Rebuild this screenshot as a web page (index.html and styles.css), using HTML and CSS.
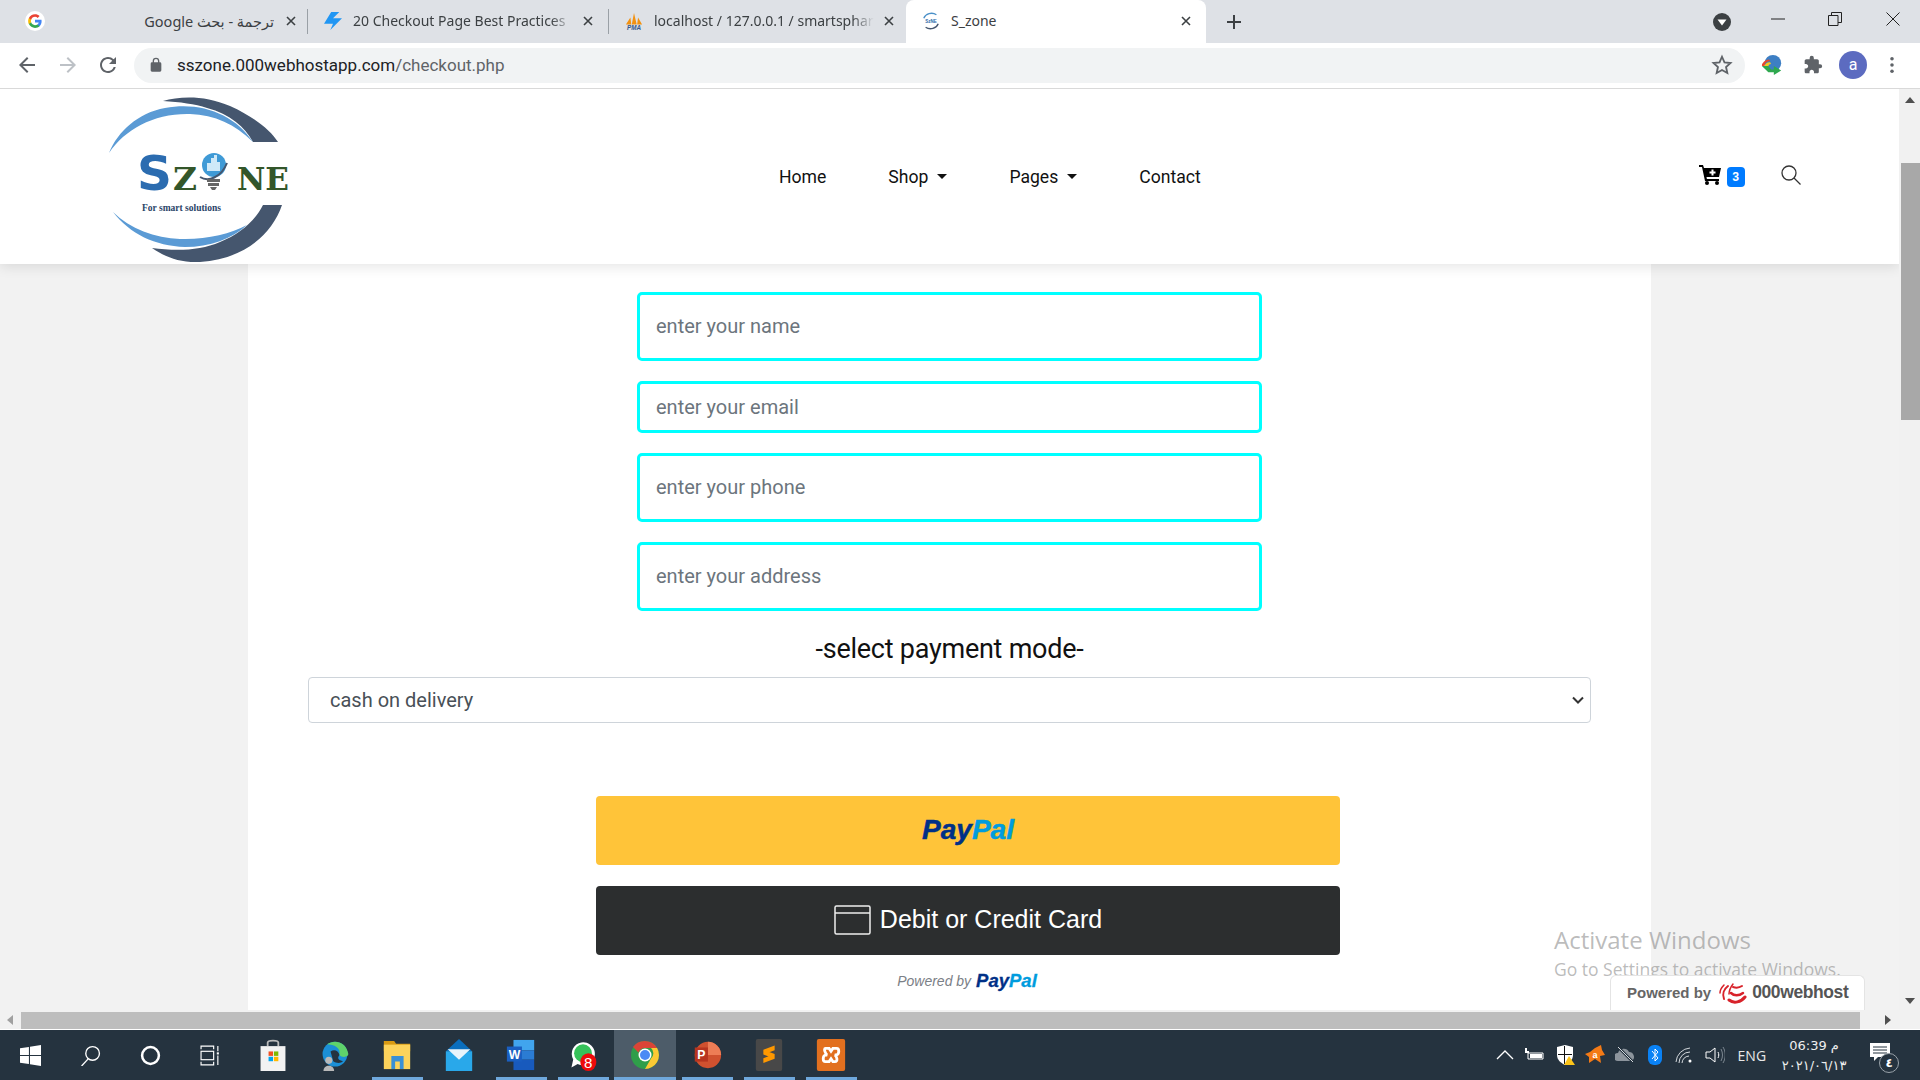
FILE: index.html
```html
<!DOCTYPE html>
<html lang="en">
<head>
    <meta charset="UTF-8">
    <title>S_zone</title>
    <link rel="stylesheet" href="styles.css">
</head>
<body>
    <!-- browser tabs -->
    <div class="tabstrip">
        <div class="tab tab-first">
            <svg class="tab-icon" viewBox="0 0 24 24">
                <circle cx="12" cy="12" r="12" fill="#fff"/>
                <g transform="translate(3 3) scale(.75)">
                    <path fill="#4285F4" d="M22.56 12.25c0-.78-.07-1.53-.2-2.25H12v4.26h5.92c-.26 1.37-1.04 2.53-2.21 3.31v2.77h3.57c2.08-1.92 3.28-4.74 3.28-8.09z"/>
                    <path fill="#34A853" d="M12 23c2.97 0 5.46-.98 7.28-2.66l-3.57-2.77c-.98.66-2.23 1.06-3.71 1.06-2.86 0-5.29-1.93-6.16-4.53H2.18v2.84C3.99 20.53 7.7 23 12 23z"/>
                    <path fill="#FBBC05" d="M5.84 14.09c-.22-.66-.35-1.36-.35-2.09s.13-1.43.35-2.09V7.07H2.18C1.43 8.55 1 10.22 1 12s.43 3.45 1.18 4.93l2.85-2.22.81-.62z"/>
                    <path fill="#EA4335" d="M12 5.38c1.62 0 3.06.56 4.21 1.64l3.15-3.15C17.45 2.09 14.97 1 12 1 7.7 1 3.99 3.47 2.18 7.07l3.66 2.84c.87-2.6 3.3-4.53 6.16-4.53z"/>
                </g>
            </svg>
            <span class="tab-title tab-title-rtl" dir="rtl">ترجمة - بحث Google</span>
            <svg class="tab-close" viewBox="0 0 10 10"><path d="M1 1l8 8M9 1l-8 8"/></svg>
        </div>
        <div class="tab-sep"></div>
        <div class="tab">
            <svg class="tab-icon" viewBox="0 0 20 20"><path fill="#2196f3" d="M8 0L0 13h10L7 20 20 7H10l7-7z"/></svg>
            <span class="tab-title tab-title-fade">20 Checkout Page Best Practices</span>
            <svg class="tab-close" viewBox="0 0 10 10"><path d="M1 1l8 8M9 1l-8 8"/></svg>
        </div>
        <div class="tab-sep"></div>
        <div class="tab">
            <svg class="tab-icon" viewBox="0 0 20 20">
                <path fill="#f29111" d="M1 14L6 6l1 8zM7.500 14L10 1l3 13zM13.500 14l1-8 4.500 8z"/>
                <text class="pma-text" x="10" y="20">PMA</text>
            </svg>
            <span class="tab-title tab-title-fade">localhost / 127.0.0.1 / smartsphar</span>
            <svg class="tab-close" viewBox="0 0 10 10"><path d="M1 1l8 8M9 1l-8 8"/></svg>
        </div>
        <div class="tab tab-active">
            <svg class="tab-icon" viewBox="0 0 20 20">
                <path fill="none" stroke="#4a90c8" stroke-width="1.500" d="M2 7a9 8 0 0 1 14-4"/>
                <path fill="none" stroke="#45566e" stroke-width="1.500" d="M18 13a9 8 0 0 1-14 4"/>
                <text class="favicon-text" x="10" y="12">SzNE</text>
            </svg>
            <span class="tab-title">S_zone</span>
            <svg class="tab-close" viewBox="0 0 10 10"><path d="M1 1l8 8M9 1l-8 8"/></svg>
        </div>
        <svg class="new-tab" viewBox="0 0 14 14"><path d="M7 0v14M0 7h14"/></svg>
        <svg class="tab-search" viewBox="0 0 18 18">
            <circle cx="9" cy="9" r="9" fill="#3c4043"/>
            <path fill="#fff" d="M4.500 6.500h9L9 12.500z"/>
        </svg>
        <div class="window-controls">
            <svg class="win-btn win-min" viewBox="0 0 14 14"><path d="M0 7h14"/></svg>
            <svg class="win-btn win-restore" viewBox="0 0 14 14"><path d="M.5 3.500h9.500v10H.5zM3.500 3.500V.5h10v10H10"/></svg>
            <svg class="win-btn win-close" viewBox="0 0 14 14"><path d="M.5.5l13 13M13.500.5l-13 13"/></svg>
        </div>
    </div>

    <!-- address bar -->
    <div class="toolbar">
        <svg class="nav-icon" viewBox="0 0 24 24"><path d="M20 11H7.830l5.590-5.590L12 4l-8 8 8 8 1.410-1.410L7.830 13H20v-2z"/></svg>
        <svg class="nav-icon nav-disabled" viewBox="0 0 24 24"><path d="M4 11h12.170l-5.590-5.590L12 4l8 8-8 8-1.410-1.410L16.170 13H4v-2z"/></svg>
        <svg class="nav-icon" viewBox="0 0 24 24"><path d="M17.650 6.350A7.958 7.958 0 0 0 12 4c-4.420 0-7.990 3.580-7.990 8s3.570 8 7.990 8c3.730 0 6.840-2.550 7.730-6h-2.080A5.990 5.990 0 0 1 12 18c-3.310 0-6-2.690-6-6s2.690-6 6-6c1.660 0 3.140.690 4.220 1.780L13 11h7V4l-2.350 2.350z"/></svg>
        <div class="omnibox">
            <svg class="lock-icon" viewBox="0 0 24 24"><path d="M18 8h-1V6A5 5 0 0 0 7 6v2H6a2 2 0 0 0-2 2v10c0 1.100.9 2 2 2h12a2 2 0 0 0 2-2V10a2 2 0 0 0-2-2zM9 6a3 3 0 0 1 6 0v2H9V6z"/></svg>
            <span class="url"><span class="url-host">sszone.000webhostapp.com</span>/checkout.php</span>
            <svg class="star-icon" viewBox="0 0 24 24"><path d="M12 3l2.700 6.100 6.600.7-4.900 4.400 1.400 6.500L12 17.400l-5.800 3.300 1.400-6.500-4.900-4.400 6.600-.7z"/></svg>
        </div>
        <svg class="idm-icon" viewBox="0 0 24 24">
            <circle cx="13" cy="10" r="9" fill="#3d7fc4"/>
            <path fill="#e6462e" d="M1 13a8 7 0 0 1 8-7l1 2a5 5 0 0 0-6 5z"/>
            <path fill="#f4c81e" d="M4 14a5 5 0 0 1 6-5l1 2a3 3 0 0 0-3 3z"/>
            <path fill="#2fa84f" d="M1 13h7l3 4h3v-4l8 5-8 5v-3H8z"/>
        </svg>
        <svg class="ext-icon" viewBox="0 0 24 24"><path d="M20.500 11H19V7c0-1.100-.9-2-2-2h-4V3.500a2.500 2.500 0 0 0-5 0V5H4c-1.100 0-1.990.9-1.990 2v3.800H3.500c1.490 0 2.700 1.210 2.700 2.700s-1.210 2.700-2.700 2.700H2V20c0 1.100.9 2 2 2h3.800v-1.500c0-1.490 1.210-2.700 2.700-2.700s2.700 1.210 2.700 2.700V22H17c1.100 0 2-.9 2-2v-4h1.500a2.500 2.500 0 0 0 0-5z"/></svg>
        <div class="avatar">a</div>
        <svg class="menu-icon" viewBox="0 0 4 18"><circle cx="2" cy="2" r="2"/><circle cx="2" cy="9" r="2"/><circle cx="2" cy="16" r="2"/></svg>
    </div>

    <div class="viewport">
        <div class="view-main">
            <div class="page">
                <header class="site-header">
                    <svg class="logo" viewBox="0 0 240 175">
                        <path fill="#45566e" d="M83 12C100 7 125 6 150 17c22 10 40 23 48 36h-25c-8-15-23-28-46-34-12-4-27-6-44-7z"/>
                        <path fill="#5b9bd5" d="M29 64c9-22 29-40 56-45 35-7 70 6 88 34-18-18-38-27-63-28-35-1-65 15-81 39z"/>
                        <path fill="#45566e" d="M202 116c-10 29-37 54-82 57-20 1-35-5-48-14 23 3 48 3 68-6 20-8 35-21 43-37z"/>
                        <path fill="#5b9bd5" d="M33 123c17 22 42 34 72 35 25 0 47-8 62-22-17 9-42 15-67 14-25-1-50-10-67-27z"/>
                        <text class="logo-s" x="57" y="101" textLength="35" lengthAdjust="spacingAndGlyphs">S</text>
                        <text class="logo-green" x="93" y="101" textLength="24" lengthAdjust="spacingAndGlyphs">Z</text>
                        <text class="logo-green" x="157" y="101" textLength="52" lengthAdjust="spacingAndGlyphs">NE</text>
                        <circle cx="134" cy="76" r="12" fill="#3f9ad6"/>
                        <path fill="#cfe9f8" d="M127 82v-8h4v-5h3v-3h3v7h3v9z"/>
                        <path fill="none" stroke="#45566e" stroke-width="2" d="M120 88c8 5 21 1 27-14"/>
                        <path fill="#666" d="M127 90h13v3h-13zM128 94h11v3h-11zM130 98h7l-2 3h-3z"/>
                        <text class="logo-tag" x="62" y="122">For smart solutions</text>
                    </svg>
                    <nav class="site-nav">
                        <a class="nav-link">Home</a>
                        <a class="nav-link">Shop<span class="caret"></span></a>
                        <a class="nav-link">Pages<span class="caret"></span></a>
                        <a class="nav-link">Contact</a>
                    </nav>
                    <div class="header-actions">
                        <svg class="cart-icon" viewBox="0 0 22 20">
                            <path d="M0 0h4l1 3h17l-2 9H7.500l.4 2H20v2H6L3 2H0z"/>
                            <circle cx="8" cy="18" r="2"/><circle cx="18" cy="18" r="2"/>
                            <path fill="#fff" d="M12.500 4.500h2v2h2v2h-2v2h-2v-2h-2v-2h2z"/>
                        </svg>
                        <span class="cart-badge">3</span>
                        <svg class="search-icon" viewBox="0 0 20 20"><circle cx="8" cy="8" r="7"/><path d="M13 13l6.500 6.500"/></svg>
                    </div>
                </header>

                <main class="sheet">
                    <form class="checkout-fields">
                        <input class="field field-tall" type="text" placeholder="enter your name">
                        <input class="field" type="text" placeholder="enter your email">
                        <input class="field field-tall" type="text" placeholder="enter your phone">
                        <input class="field field-tall" type="text" placeholder="enter your address">
                    </form>
                    <h3 class="pay-title">-select payment mode-</h3>
                    <div class="select-wrap">
                        <select class="pay-select">
                            <option>cash on delivery</option>
                        </select>
                        <svg class="select-arrow" viewBox="0 0 12 8"><path d="M1 1.500l5 5 5-5"/></svg>
                    </div>
                    <div class="paypal-box">
                        <div class="pp-btn pp-yellow">
                            <span class="pp-word"><span class="pp-dark">Pay</span><span class="pp-light">Pal</span></span>
                        </div>
                        <div class="pp-btn pp-black">
                            <svg class="card-icon" viewBox="0 0 37 30"><rect x="1" y="1" width="35" height="28" rx="1.500"/><path d="M1 8h35"/></svg>
                            <span>Debit or Credit Card</span>
                        </div>
                        <div class="pp-powered">
                            <span>Powered by</span>
                            <span class="pp-word pp-word-small"><span class="pp-dark">Pay</span><span class="pp-light">Pal</span></span>
                        </div>
                    </div>
                </main>

                <div class="watermark">
                    <div class="watermark-title">Activate Windows</div>
                    <div class="watermark-sub">Go to Settings to activate Windows.</div>
                </div>
                <div class="host-badge">
                    <span>Powered by</span>
                    <svg class="host-logo" viewBox="0 0 28 24">
                        <g fill="none" stroke="#d8222a" stroke-linecap="round">
                            <path stroke-width="3" d="M10 20c5 4 12 2 16-3"/>
                            <path stroke-width="2.500" d="M12 13c3 3 8 3 12 0"/>
                            <path stroke-width="2" d="M14 7c3 1 6 1 9-1"/>
                            <path stroke-width="2" d="M5 19C3 14 5 9 9 6"/>
                            <path stroke-width="1.500" d="M10 14c0-3 1-6 4-10"/>
                            <path stroke-width="1.500" d="M1 13c0-3 2-6 4-8"/>
                        </g>
                    </svg>
                    <span class="host-name">000webhost</span>
                </div>
            </div>
            <div class="vscroll">
                <svg class="scroll-arrow" viewBox="0 0 10 6"><path d="M5 0l5 6H0z"/></svg>
                <div class="vscroll-thumb"></div>
                <svg class="scroll-arrow scroll-arrow-end" viewBox="0 0 10 6"><path d="M5 6L0 0h10z"/></svg>
            </div>
        </div>
        <div class="hscroll">
            <svg class="hscroll-arrow hscroll-left" viewBox="0 0 6 10"><path d="M0 5l6-5v10z"/></svg>
            <div class="hscroll-thumb"></div>
            <svg class="hscroll-arrow hscroll-right" viewBox="0 0 6 10"><path d="M6 5L0 0v10z"/></svg>
        </div>
    </div>

    <!-- windows taskbar -->
    <div class="taskbar">
        <div class="task-apps">
            <div class="task-item task-tool">
                <svg class="task-icon-sm" viewBox="0 0 20 20"><path fill="#fff" d="M0 3l8.500-1.200v7.700H0zM9.500 1.600L20 0v9.500H9.500zM0 10.500h8.500v7.700L0 17zM9.500 10.500H20V20L9.500 18.400z"/></svg>
            </div>
            <div class="task-item task-tool">
                <svg class="task-icon-sm" viewBox="0 0 20 20"><circle cx="12" cy="8" r="6.500" fill="none" stroke="#fff" stroke-width="1.300"/><path stroke="#fff" stroke-width="1.300" d="M8 13l-6.500 7"/></svg>
            </div>
            <div class="task-item task-tool">
                <svg class="task-icon-sm" viewBox="0 0 20 20"><circle cx="10" cy="10" r="8" fill="none" stroke="#fff" stroke-width="2.400"/></svg>
            </div>
            <div class="task-item task-tool">
                <svg class="task-icon-sm" viewBox="0 0 20 20" fill="none" stroke="#fff" stroke-width="1.100"><path d="M1 4V1h12v3M1 16v3h12v-3"/><rect x="1" y="6" width="12" height="8"/><path d="M17 1v5M17 10v9"/><path stroke-width="2" d="M16 8h2"/></svg>
            </div>
            <div class="task-item task-first-app">
                <svg class="task-icon" viewBox="0 0 30 36">
                    <path fill="none" stroke="#bbb" stroke-width="2" d="M9 8V4c0-3 12-3 12 0v4"/>
                    <path fill="#f2f2f2" d="M1 8h28v28H1z"/>
                    <path fill="#f25022" d="M10 14h5v5h-5z"/><path fill="#7fba00" d="M16 14h5v5h-5z"/>
                    <path fill="#00a4ef" d="M10 20h5v5h-5z"/><path fill="#ffb900" d="M16 20h5v5h-5z"/>
                </svg>
            </div>
            <div class="task-item">
                <svg class="task-icon" viewBox="0 0 30 36">
                    <circle cx="15" cy="17" r="14" fill="#1b8fd6"/>
                    <path fill="#5fd36b" d="M6 6c8-6 22-3 24 11 0 4-8 4-10 1 2-8-6-12-14-12z"/>
                    <path fill="#25333f" d="M10 14c4-3 9-1 10 4-3 4-1 6 4 7-3 3-8 2-11 0z"/>
                    <circle cx="8" cy="24" r="4" fill="#b9b9b9"/><path fill="#b9b9b9" d="M2 36c0-8 12-8 12 0z"/>
                </svg>
            </div>
            <div class="task-item task-open">
                <svg class="task-icon" viewBox="0 0 30 34">
                    <path fill="#d99a12" d="M1 2h11l2 3h15v8H1z"/>
                    <path fill="#fdd35b" d="M1 6h28v26H1z"/>
                    <path fill="#3a90d6" d="M9 32V18h13v14h-4v-8h-5v8z"/>
                </svg>
            </div>
            <div class="task-item">
                <svg class="task-icon" viewBox="0 0 30 34">
                    <path fill="#0a6ebd" d="M1 13L15 0l14 13z"/>
                    <path fill="#29a8ea" d="M1 13h28v21H1z"/>
                    <path fill="#e8f4fb" d="M3 11h24L15 22z"/>
                </svg>
            </div>
            <div class="task-item task-open">
                <svg class="task-icon" viewBox="0 0 30 34">
                    <path fill="#41a5ee" d="M7 1h22v11H7z"/><path fill="#2b7cd3" d="M7 12h22v10H7z"/>
                    <path fill="#185abd" d="M7 22h22v11H7z"/>
                    <path fill="#1a5fc1" d="M0 8h16v16H0z"/>
                    <text class="icon-letter" x="8" y="21">W</text>
                </svg>
            </div>
            <div class="task-item task-open">
                <svg class="task-icon" viewBox="0 0 30 36">
                    <path fill="#fff" d="M2 32l2-9a13 13 0 1 1 5 5z"/>
                    <circle cx="15" cy="16" r="10" fill="#36c25a"/>
                    <ellipse cx="21" cy="26" rx="9" ry="10" fill="#ee0b0b"/>
                    <text class="icon-badge" x="21" y="33">8</text>
                </svg>
            </div>
            <div class="task-item task-active">
                <svg class="task-icon" viewBox="0 0 30 30">
                    <circle cx="15" cy="15" r="14" fill="#2f9e4a"/>
                    <path fill="#db4437" d="M15 1a14 14 0 0 1 12.100 7H15a7 7 0 0 0-6.500 4.500L3 7A14 14 0 0 1 15 1z"/>
                    <path fill="#fcc934" d="M27.100 8A14 14 0 0 1 15 29l6-10.500A7 7 0 0 0 21 8z"/>
                    <circle cx="15" cy="15" r="6.500" fill="#fff"/><circle cx="15" cy="15" r="5" fill="#4a8af4"/>
                </svg>
            </div>
            <div class="task-item task-open">
                <svg class="task-icon" viewBox="0 0 30 34">
                    <circle cx="16" cy="17" r="14" fill="#d0512f"/>
                    <path fill="#ed7d56" d="M16 3a14 14 0 0 1 14 14H16z"/>
                    <path fill="#b7351f" d="M2 9h14v15H2z"/>
                    <text class="icon-letter" x="9" y="21">P</text>
                </svg>
            </div>
            <div class="task-item task-open">
                <svg class="task-icon" viewBox="0 0 30 34">
                    <rect x="1" width="28" height="34" rx="2" fill="#484848"/>
                    <path fill="#ff9800" d="M21 7v5L9 16.500v-5zM9 11.500l12 4.500v5L9 16.500zM21 16v5L9 25.500v-5z"/>
                </svg>
            </div>
            <div class="task-item task-open">
                <svg class="task-icon" viewBox="0 0 30 34">
                    <rect width="30" height="34" rx="2" fill="#e2701f"/>
                    <path fill="none" stroke="#fff" stroke-width="3" d="M9 10h4l2 3 2-3h4c3 0 3 6 0 7h-2c2 1 4 7 0 7h-2l-2-3-2 3H9c-3 0-3-6 0-7h2c-2-1-4-7-2-7z"/>
                </svg>
            </div>
        </div>
        <div class="tray">
            <svg class="tray-icon" viewBox="0 0 20 20"><path fill="none" stroke="#fff" stroke-width="1.300" d="M2 14l8-8 8 8"/></svg>
            <svg class="tray-icon" viewBox="0 0 20 20" fill="#fff"><path fill="none" stroke="#fff" d="M3 8v6h15V8z"/><path d="M5 9h12v4H5z"/><path d="M1 3h1v3h2V3h0v5H0V3z"/></svg>
            <svg class="tray-icon" viewBox="0 0 20 20">
                <path fill="#fff" d="M10 0l8 2v8c0 5-4 8-8 10-4-2-8-5-8-10V2z"/>
                <path fill="#111" d="M10 1v8h7v1H10v9h-1v-9H3V9h6V1z"/>
                <path fill="#fcc419" d="M14 11l6 9h-11z"/>
            </svg>
            <svg class="tray-icon" viewBox="0 0 20 20"><path fill="#f47a16" d="M10 3l6-3 1 5 3 5-5 1 1 7-6-4-6 4v-6l-4-3 5-2z"/><text class="avast-a" x="10" y="13">a</text></svg>
            <svg class="tray-icon" viewBox="0 0 20 20"><path fill="#8c949c" d="M3 16a4 4 0 0 1 0-8 6 6 0 0 1 11-1 5 5 0 0 1 3 9z"/><path stroke="#25333f" stroke-width="2.500" d="M3 2l15 15"/><path stroke="#d7dce0" d="M3 2l15 15"/></svg>
            <svg class="tray-icon" viewBox="0 0 20 20"><rect x="3" width="14" height="20" rx="6" fill="#0a82f5"/><path fill="none" stroke="#fff" d="M7 6l6 7-3 3V4l3 3-6 7"/></svg>
            <svg class="tray-icon" viewBox="0 0 20 20" fill="none" stroke="#d4d9dd"><path d="M1 17A15 15 0 0 1 15 3"/><path d="M4 18A11 11 0 0 1 15 7"/><path d="M7 18a8 8 0 0 1 7-7"/><circle cx="15" cy="16" r="1.500" fill="#fff" stroke="none"/></svg>
            <svg class="tray-icon" viewBox="0 0 20 20" fill="none" stroke="#fff"><path d="M1 7h4l5-4v14l-5-4H1z"/><path d="M13 7c1 2 1 4 0 6"/><path stroke="#7c8790" d="M16 4c2 4 2 8 0 12M18 2c3 5 3 11 0 16"/></svg>
        </div>
        <span class="tray-lang">ENG</span>
        <div class="clock">
            <span>06:39 م</span>
            <span>٢٠٢١/٠٦/١٣</span>
        </div>
        <div class="notify">
            <svg class="notify-icon" viewBox="0 0 20 18"><path fill="#fff" d="M0 0h20v14H8l-4 4v-4H0z"/><path stroke="#25333f" d="M3 4h14M3 7h14M3 10h14"/></svg>
            <span class="notify-count">٤</span>
        </div>
    </div>
</body>
</html>
```

FILE: styles.css
```css
* {
    box-sizing: border-box;
}

body {
    margin: 0;
    width: 1920px;
    height: 1080px;
    overflow: hidden;
    font-family: 'Roboto', 'DejaVu Sans', sans-serif;
    display: flex;
    flex-direction: column;
    background-color: #fff;
}

/* tabs */
.tabstrip {
    height: 43px;
    flex: none;
    display: flex;
    align-items: stretch;
    padding-left: 7px;
    background-color: #dee1e6;
}

.tab {
    width: 300px;
    flex: none;
    display: flex;
    align-items: center;
    padding: 0 15px 2px 16px;
    color: #3c4043;
}

.tab-first {
    padding: 0 11px 2px 18px;
}

.tab-active {
    margin-left: -3px;
    background-color: #fff;
    border-radius: 8px 8px 0 0;
}

.tab-sep {
    width: 1px;
    height: 25px;
    margin-top: 9px;
    flex: none;
    background-color: #9aa0a6;
}

.tab-icon {
    width: 18px;
    height: 18px;
    flex: none;
    margin-right: 11px;
}

.tab-first .tab-icon {
    width: 20px;
    height: 20px;
}

.tab-title {
    flex: 1;
    min-width: 0;
    white-space: nowrap;
    overflow: hidden;
    font-family: 'Noto Sans', 'DejaVu Sans', sans-serif;
    font-size: 14px;
}

.tab-title-rtl {
    font-size: 14.500px;
    line-height: 24px;
}

.tab-title-fade {
    -webkit-mask-image: linear-gradient(to right, #000 90%, transparent 100%);
    mask-image: linear-gradient(to right, #000 90%, transparent 100%);
}

.tab-close {
    width: 10px;
    height: 10px;
    flex: none;
    margin-left: 10px;
    stroke: #3c4043;
    stroke-width: 1.6;
}

.tab-first .tab-close {
    margin-left: 12px;
}

.pma-text {
    font: italic bold 7px 'Liberation Sans', sans-serif;
    fill: #34588c;
    text-anchor: middle;
}

.favicon-text {
    font: bold 5px 'Liberation Sans', sans-serif;
    fill: #2e6aa8;
    text-anchor: middle;
}

.new-tab {
    width: 14px;
    height: 14px;
    flex: none;
    align-self: center;
    margin-left: 21px;
    stroke: #3c4043;
    stroke-width: 2;
}

.tab-search {
    width: 18px;
    height: 18px;
    flex: none;
    margin: 13px 0 0 472px;
}

.window-controls {
    display: flex;
    gap: 42px;
    margin-left: 40px;
    padding-top: 12px;
}

.win-btn {
    width: 14px;
    height: 14px;
    fill: none;
    stroke: #222;
    stroke-width: 1;
}

.win-restore {
    margin-left: 1px;
}

.win-close {
    margin-left: 2px;
}

/* address bar */
.toolbar {
    height: 46px;
    flex: none;
    display: flex;
    align-items: center;
    padding: 0 0 1px 15px;
    background-color: #fff;
    border-bottom: 1px solid #d9d9d9;
}

.nav-icon {
    width: 24px;
    height: 24px;
    flex: none;
    margin-right: 16.500px;
    fill: #5f6368;
}

.nav-disabled {
    fill: #bdc1c6;
}

.omnibox {
    width: 1611px;
    height: 35px;
    margin-left: -2.500px;
    flex: none;
    display: flex;
    align-items: center;
    padding: 0 12px 0 14px;
    border-radius: 18px;
    background-color: #f1f3f4;
}

.lock-icon {
    width: 16px;
    height: 16px;
    fill: #5f6368;
    margin-right: 13px;
}

.url {
    flex: 1;
    font-size: 17px;
    color: #5f6368;
    white-space: nowrap;
}

.url-host {
    color: #202124;
}

.star-icon {
    width: 22px;
    height: 22px;
    fill: none;
    stroke: #5f6368;
    stroke-width: 2;
}

.idm-icon {
    width: 22px;
    height: 22px;
    flex: none;
    margin-left: 16px;
}

.ext-icon {
    width: 20px;
    height: 20px;
    flex: none;
    margin-left: 20px;
    fill: #5f6368;
}

.avatar {
    width: 28px;
    height: 28px;
    flex: none;
    margin-left: 16px;
    border-radius: 50%;
    background-color: #5c6bc0;
    color: #fff;
    font-size: 16px;
    text-align: center;
    line-height: 27px;
}

.menu-icon {
    width: 4px;
    height: 16px;
    flex: none;
    margin-left: 23px;
    fill: #5f6368;
}

/* page area */
.viewport {
    flex: none;
    height: 941px;
    display: flex;
    flex-direction: column;
}

.view-main {
    height: 921px;
    display: flex;
}

.page {
    width: 1899px;
    height: 921px;
    flex: none;
    position: relative;
    overflow: hidden;
    background-color: #f2f2f2;
}

.site-header {
    height: 175px;
    position: relative;
    z-index: 2;
    display: flex;
    align-items: center;
    padding-left: 80px;
    background-color: #fff;
    box-shadow: 0 3px 12px rgba(0, 0, 0, 0.1);
}

.logo {
    width: 240px;
    height: 175px;
    flex: none;
}

.logo-s {
    font: bold 48px 'DejaVu Sans', sans-serif;
    fill: #2b6cb0;
}

.logo-green {
    font: bold 32px 'DejaVu Serif', serif;
    fill: #33562a;
}

.logo-tag {
    font: bold 9.500px 'Liberation Serif', serif;
    fill: #2a4468;
}

.site-nav {
    display: flex;
    gap: 62px;
    margin-left: 459px;
}

.nav-link {
    font-size: 17.600px;
    color: #111;
    display: flex;
    align-items: center;
}

.caret {
    width: 0;
    height: 0;
    margin-left: 9px;
    border-top: 5px solid #111;
    border-left: 5px solid transparent;
    border-right: 5px solid transparent;
}

.header-actions {
    display: flex;
    align-items: center;
    margin-left: 498px;
}

.cart-icon {
    width: 22px;
    height: 20px;
    flex: none;
    margin-top: -3px;
}

.cart-badge {
    width: 18px;
    height: 20px;
    margin-left: 6px;
    border-radius: 4px;
    background-color: #007bff;
    color: #fff;
    font-size: 12px;
    font-weight: 700;
    text-align: center;
    line-height: 20px;
}

.search-icon {
    width: 20px;
    height: 20px;
    flex: none;
    margin: -4px 0 0 36px;
    fill: none;
    stroke: #333;
    stroke-width: 1.300;
}

.sheet {
    width: 1403px;
    height: 746px;
    margin-left: 248px;
    padding-top: 28px;
    display: flex;
    flex-direction: column;
    align-items: center;
    background-color: #fff;
}

.checkout-fields {
    display: flex;
    flex-direction: column;
    gap: 20px;
}

.field {
    width: 625px;
    height: 52px;
    padding: 0 16px;
    border: 3px solid #00ffff;
    border-radius: 5px;
    background-color: #fff;
    font-family: 'Roboto', sans-serif;
    font-size: 20px;
    color: #495057;
}

.field-tall {
    height: 69px;
    padding-bottom: 2px;
}

.field::placeholder {
    color: #6c757d;
    opacity: 1;
}

.pay-title {
    margin: 21px 0 11px;
    font-size: 27px;
    font-weight: 400;
    letter-spacing: -0.250px;
    line-height: 34px;
    color: #111;
}

.select-wrap {
    position: relative;
    width: 1283px;
    height: 46px;
    flex: none;
}

.pay-select {
    width: 100%;
    height: 46px;
    padding: 0 21px;
    border: 1px solid #ced4da;
    border-radius: 4px;
    background-color: #fff;
    font-family: 'Roboto', sans-serif;
    font-size: 20px;
    color: #495057;
    appearance: none;
}

.select-arrow {
    position: absolute;
    right: 7px;
    top: 19px;
    width: 12px;
    height: 8px;
    fill: none;
    stroke: #333;
    stroke-width: 2;
}

.paypal-box {
    width: 744px;
    margin: 73px 0 0 37px;
    display: flex;
    flex-direction: column;
    gap: 21px;
}

.pp-btn {
    height: 69px;
    display: flex;
    align-items: center;
    justify-content: center;
    padding-bottom: 2px;
    border-radius: 4px;
    font-family: 'Liberation Sans', sans-serif;
}

.pp-yellow {
    background-color: #ffc439;
}

.pp-black {
    gap: 9px;
    background-color: #2c2e2f;
    color: #fff;
    font-size: 25px;
}

.card-icon {
    width: 37px;
    height: 30px;
    fill: none;
    stroke: #eee;
    stroke-width: 1.500;
}

.pp-word {
    font: italic bold 28px 'Liberation Sans', sans-serif;
    -webkit-text-stroke: 0.500px currentColor;
}

.pp-word-small {
    font-size: 18.500px;
    -webkit-text-stroke: 0.300px currentColor;
}

.pp-dark {
    color: #003087;
}

.pp-light {
    color: #009cde;
}

.pp-powered {
    margin-top: -6px;
    display: flex;
    justify-content: center;
    align-items: center;
    gap: 5px;
    padding-right: 2px;
    font: italic 14px 'Liberation Sans', sans-serif;
    color: #7b8086;
}

/* windows watermark and host badge sit over the page */
.watermark {
    position: absolute;
    left: 1554px;
    top: 834px;
    color: rgba(130, 130, 130, 0.55);
    font-family: 'Open Sans', sans-serif;
    white-space: nowrap;
}

.watermark-title {
    font-size: 24px;
    line-height: 33px;
}

.watermark-sub {
    font-size: 17.500px;
    line-height: 26px;
}

.host-badge {
    position: absolute;
    left: 1610px;
    bottom: 0;
    width: 255px;
    height: 35px;
    display: flex;
    align-items: center;
    padding: 0 0 2px 16px;
    border: 1px solid #e4e4e4;
    border-bottom: none;
    border-radius: 6px 6px 0 0;
    background-color: #fff;
    font-family: 'Liberation Sans', sans-serif;
    font-size: 15px;
    font-weight: 700;
    color: #666;
}

.host-logo {
    width: 28px;
    height: 24px;
    margin: 0 5px 0 8px;
}

.host-name {
    color: #555;
    font-size: 17.500px;
    letter-spacing: -0.400px;
}

/* scrollbars */
.vscroll {
    width: 21px;
    height: 921px;
    flex: none;
    display: flex;
    flex-direction: column;
    align-items: flex-end;
    background-color: #f1f1f1;
}

.scroll-arrow {
    width: 10px;
    height: 6px;
    margin: 8px 5px 0 0;
    flex: none;
    fill: #505050;
}

.scroll-arrow-end {
    margin: 0 5px 6px 0;
}

.vscroll-thumb {
    width: 19px;
    height: 257px;
    margin: 60px 0 578px;
    background-color: #a8a8a8;
}

.hscroll {
    height: 20px;
    flex: none;
    display: flex;
    align-items: center;
    padding: 2px 0 1px;
    background-color: #f1f1f1;
    border-bottom: 1px solid #fff;
}

.hscroll-arrow {
    width: 6px;
    height: 10px;
    flex: none;
    fill: #505050;
}

.hscroll-left {
    margin: 0 8px 0 7px;
    fill: #a0a0a0;
}

.hscroll-right {
    margin-left: 25px;
}

.hscroll-thumb {
    width: 1839px;
    height: 17px;
    flex: none;
    background-color: #bdbdbd;
}

/* taskbar */
.taskbar {
    height: 50px;
    flex: none;
    display: flex;
    align-items: center;
    background-color: #25333f;
    color: #fff;
}

.task-apps {
    display: flex;
    height: 50px;
}

.task-item {
    width: 62px;
    height: 50px;
    flex: none;
    display: flex;
    align-items: center;
    justify-content: center;
}

.task-tool {
    width: 60px;
}

.task-first-app {
    margin-left: 2px;
}

.task-open {
    background: linear-gradient(#6fa8dc, #6fa8dc) center bottom / 51px 3px no-repeat;
}

.task-active {
    background-color: #4d5c69;
    border-bottom: 3px solid #6fa8dc;
    padding-top: 3px;
}

.task-icon {
    width: 30px;
    height: 32px;
}

.task-icon-sm {
    width: 21px;
    height: 21px;
}

.icon-letter {
    font: bold 13px 'Liberation Sans', sans-serif;
    fill: #fff;
    text-anchor: middle;
}

.icon-badge {
    font: 17px 'Liberation Sans', sans-serif;
    fill: #fff;
    text-anchor: middle;
}

.tray {
    margin-left: 627.600px;
    display: flex;
}

.tray-icon {
    width: 20px;
    height: 20px;
    margin: 0 5px;
    flex: none;
}

.avast-a {
    font: bold 9px 'Liberation Sans', sans-serif;
    fill: #fff;
    text-anchor: middle;
}

.tray-lang {
    margin-left: 8px;
    font-family: 'Open Sans', sans-serif;
    font-size: 14px;
    color: #e8e8e8;
}

.clock {
    width: 72px;
    margin-left: 12px;
    display: flex;
    flex-direction: column;
    align-items: center;
    gap: 3px;
    font-family: 'DejaVu Sans', sans-serif;
    font-size: 13px;
    line-height: 17px;
    color: #eee;
}

.notify {
    position: relative;
    margin-left: 20px;
    width: 20px;
    height: 18px;
    margin-top: -6px;
}

.notify-icon {
    width: 20px;
    height: 18px;
    display: block;
}

.notify-count {
    position: absolute;
    left: 9px;
    top: 10px;
    width: 20px;
    height: 20px;
    border: 1px solid #9aa3aa;
    border-radius: 50%;
    background-color: #25333f;
    font-size: 12px;
    font-weight: 700;
    text-align: center;
    line-height: 18px;
}
```
